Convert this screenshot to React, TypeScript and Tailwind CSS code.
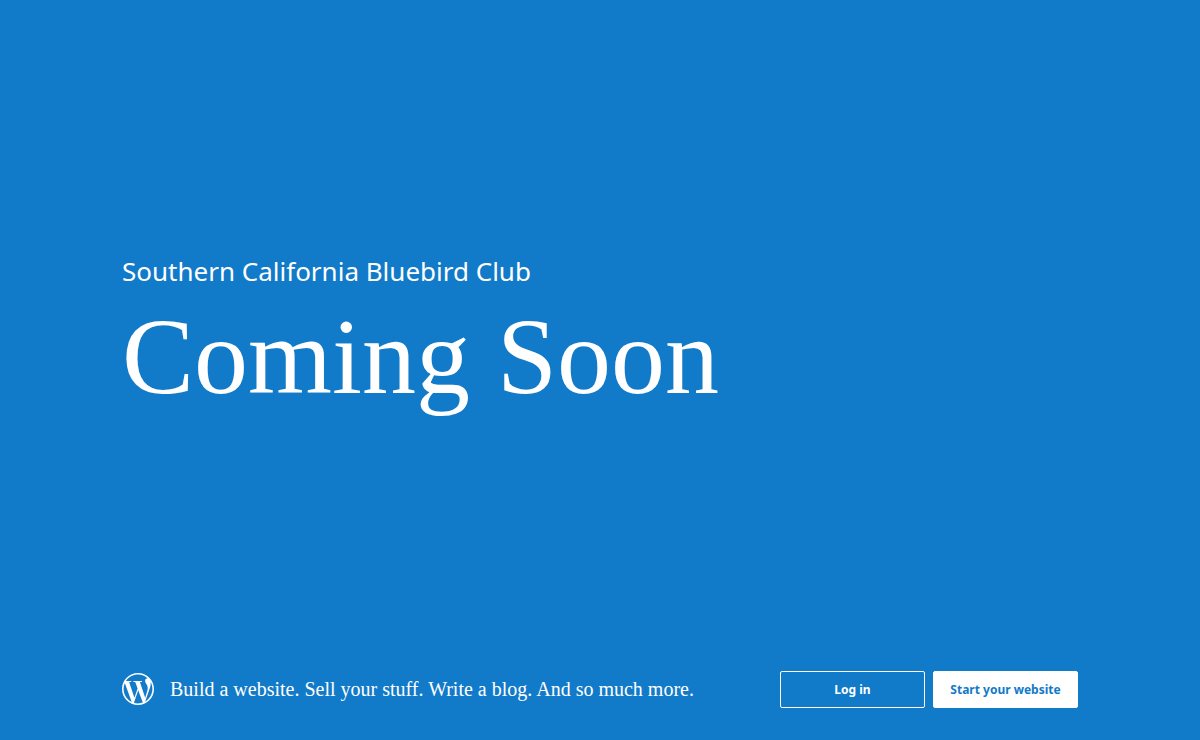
import { FaWordpressSimple } from "react-icons/fa";

const Hero = () => {
  return (
    <main className="flex flex-1 flex-col justify-center pb-2.5">
      <p className="font-['Noto_Sans','Open_Sans',sans-serif] text-[26px] leading-10">
        Southern California Bluebird Club
      </p>
      <h1 className="mt-3 font-['Liberation_Serif',serif] text-[108px] leading-[108px]">
        Coming Soon
      </h1>
    </main>
  );
};

const Footer = () => {
  return (
    <footer className="flex items-start justify-between gap-4 pb-8">
      <div className="flex items-center gap-4 pt-0.5">
        <FaWordpressSimple
          viewBox="8 8 496 496"
          className="size-8 shrink-0"
          aria-hidden="true"
        />
        <p className="font-['Liberation_Serif',serif] text-[20px] leading-8">
          Build a website. Sell your stuff. Write a blog. And so much more.
        </p>
      </div>
      <nav className="flex gap-2 font-['Noto_Sans','Open_Sans',sans-serif] text-[12px] leading-[19px] font-bold">
        <a
          href="#login"
          className="w-[145px] rounded-xs border border-white py-2 text-center"
        >
          Log in
        </a>
        <a
          href="#start"
          className="w-[145px] rounded-xs border border-white bg-white py-2 text-center text-[#117ac9]"
        >
          Start your website
        </a>
      </nav>
    </footer>
  );
};

const App = () => {
  return (
    <div className="flex min-h-screen flex-col bg-[#117ac9] px-[122px] text-white">
      <Hero />
      <Footer />
    </div>
  );
};

export default App;
